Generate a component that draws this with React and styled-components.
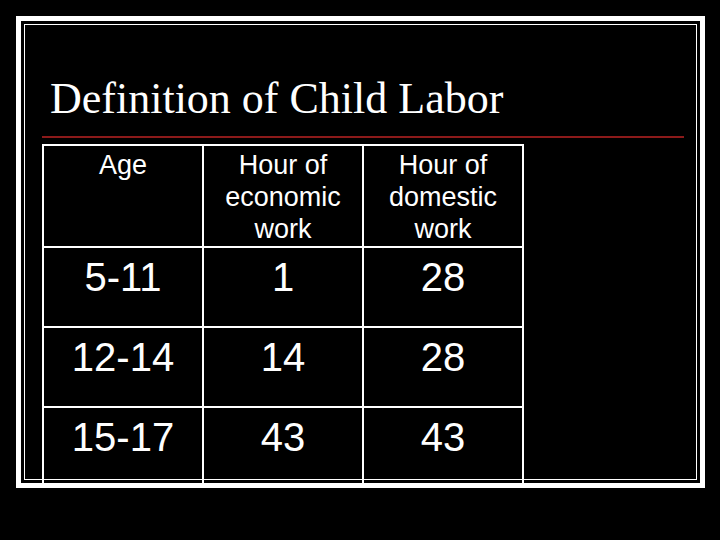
import React from 'react';
import styled, { createGlobalStyle } from 'styled-components';

const Global = createGlobalStyle`
  html, body { margin: 0; padding: 0; background: #000; }
  body { width: 720px; height: 540px; overflow: hidden; }
`;

const Slide = styled.div`
  width: 720px;
  height: 540px;
  box-sizing: border-box;
  background: #000;
  padding: 16px 15px 0 16px;
`;

const OuterFrame = styled.div`
  width: 689px;
  height: 472px;
  box-sizing: border-box;
  border: 5px solid #fff;
  padding: 3px;
  overflow: hidden;
`;

const InnerFrame = styled.div`
  height: 100%;
  box-sizing: border-box;
  border: 1px solid #fff;
  display: flex;
  flex-direction: column;
`;

const Title = styled.h1`
  margin: 49px 0 0 25px;
  font-family: "Liberation Serif", "Times New Roman", serif;
  font-weight: normal;
  font-size: 44px;
  line-height: 50px;
  color: #fff;
  flex-shrink: 0;
`;

const Rule = styled.div`
  height: 2px;
  background: #8c1a1a;
  margin: 12px 12px 0 17px;
  flex-shrink: 0;
`;

const Grid = styled.div`
  margin: 6px 0 0 17px;
  align-self: flex-start;
  flex-shrink: 0;
  display: grid;
  grid-template-columns: repeat(3, 160px);
  grid-template-rows: 102px repeat(3, 80px);
  border-left: 2px solid #fff;
  border-top: 2px solid #fff;
`;

const Cell = styled.div`
  box-sizing: border-box;
  border-right: 2px solid #fff;
  border-bottom: 2px solid #fff;
  color: #fff;
  text-align: center;
  font-family: "Liberation Sans", Arial, sans-serif;
  font-size: ${p => (p.$head ? '27px' : '40px')};
  line-height: ${p => (p.$head ? '32px' : '46px')};
  padding-top: ${p => (p.$head ? '3px' : '6px')};
`;

const headers = [['Age'], ['Hour of', 'economic', 'work'], ['Hour of', 'domestic', 'work']];
const rows = [
  ['5-11', '1', '28'],
  ['12-14', '14', '28'],
  ['15-17', '43', '43'],
];

export default function App() {
  return (
    <>
      <Global />
      <Slide>
        <OuterFrame>
          <InnerFrame>
            <Title>Definition of Child Labor</Title>
            <Rule />
            <Grid>
              {headers.map((lines, i) => (
                <Cell $head key={'h' + i}>
                  {lines.map((l, j) => (
                    <React.Fragment key={j}>
                      {j > 0 && <br />}
                      {l}
                    </React.Fragment>
                  ))}
                </Cell>
              ))}
              {rows.map((r, i) =>
                r.map((v, j) => <Cell key={i + '-' + j}>{v}</Cell>)
              )}
            </Grid>
          </InnerFrame>
        </OuterFrame>
      </Slide>
    </>
  );
}
